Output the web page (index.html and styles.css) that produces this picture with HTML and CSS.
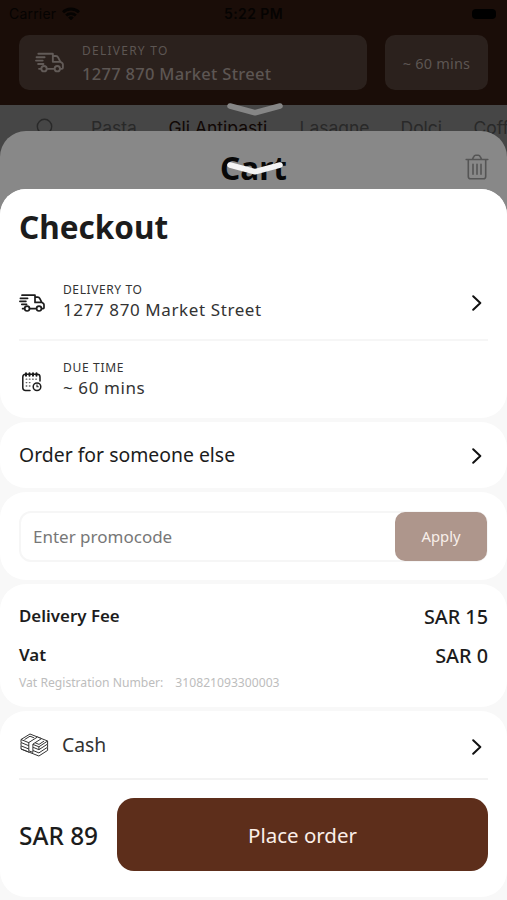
FILE: index.html
```html
<!DOCTYPE html>
<html lang="en">
<head>
<meta charset="utf-8">
<title>Checkout</title>
<link rel="stylesheet" href="styles.css">
</head>
<body>
<svg class="defs" width="0" height="0">
  <symbol id="truck" viewBox="0 0 26 18">
    <g fill="none" stroke="currentColor" stroke-width="1.7" stroke-linecap="round" stroke-linejoin="round">
      <path d="M3 1.200h13v7.200h6.800M16 3.200h2.800q1.300 0 1.900 1.200l2.100 4 1.300.8q.9.600.9 1.600v3q0 .9-.9.900h-1M17.200 14.700H11M5.400 14.700H3.600M1.400 4.300h7.200M.9 7.300h6M2.800 10.300h4.800"/>
      <circle cx="8.100" cy="14.600" r="2.400"/><circle cx="20" cy="14.600" r="2.400"/>
    </g>
  </symbol>
  <symbol id="chevron" viewBox="0 0 10 16">
    <path d="M1.200 1.200 8.300 8 1.200 14.800" fill="none" stroke="currentColor" stroke-width="2" stroke-linecap="round" stroke-linejoin="round"/>
  </symbol>
  <symbol id="grabber" viewBox="0 0 58 16">
    <path d="M4 4 29 10.800 54 4" fill="none" stroke="currentColor" stroke-width="5.600" stroke-linecap="round" stroke-linejoin="round"/>
  </symbol>
</svg>

<div class="home">
  <header class="top">
    <div class="status">
      <span class="carrier">Carrier
        <svg width="18" height="13" viewBox="0 0 18 13"><path d="M0 4.200a13 13 0 0 1 18 0l-2 2.100a10 10 0 0 0-14 0zM3.200 7.500a8.400 8.400 0 0 1 11.600 0l-1.900 2a5.700 5.700 0 0 0-7.800 0zM6.200 10.600a4 4 0 0 1 5.600 0L9 13.400z" fill="currentColor"/></svg>
      </span>
      <span class="clock">5:22 PM</span>
      <span class="battery"></span>
    </div>
    <div class="chips">
      <div class="chip address">
        <svg width="29" height="21"><use href="#truck"/></svg>
        <div>
          <div class="chip-label">DELIVERY TO</div>
          <div class="chip-value">1277 870 Market Street</div>
        </div>
      </div>
      <div class="chip eta">~ 60 mins</div>
    </div>
  </header>
  <nav class="tabs">
    <svg width="17" height="20" viewBox="0 0 17 20"><circle cx="8.500" cy="8.500" r="7.200" fill="none" stroke="currentColor" stroke-width="1.400"/></svg>
    <span class="pasta">Pasta</span><span class="active">Gli Antipasti</span><span class="lasagne">Lasagne</span><span class="dolci">Dolci</span><span>Coff</span>
  </nav>
</div>

<svg class="grab grab-cart"><use href="#grabber"/></svg>
<section class="cart">
  <h2>Cart</h2>
  <svg class="trash" width="24" height="26" viewBox="0 0 24 26" fill="none" stroke="currentColor" stroke-width="1.600" stroke-linecap="round" stroke-linejoin="round">
    <path d="M1.200 5.500h21.600M7.500 5.200l1.300-2.600q.6-1.300 1.900-1.300h2.600q1.300 0 1.900 1.300l1.300 2.600M3.300 6v16.500q0 2.300 2.300 2.300h12.800q2.300 0 2.300-2.300V6M8 10.300v10M12 10.300v10M16 10.300v10"/>
  </svg>
</section>
<svg class="grab grab-checkout"><use href="#grabber"/></svg>

<main class="checkout">
  <section class="card details">
    <h1>Checkout</h1>
    <div class="row">
      <svg class="icon" width="26" height="18"><use href="#truck"/></svg>
      <div class="info"><div class="label">DELIVERY TO</div><div class="value">1277 870 Market Street</div></div>
      <svg class="chev" width="10" height="16"><use href="#chevron"/></svg>
    </div>
    <div class="row due">
      <svg class="icon" width="26" height="20" viewBox="0 0 26 20" fill="none" stroke="currentColor" stroke-width="1.500" stroke-linecap="round">
        <path d="M11 18.400H6.500q-2.700 0-2.700-2.700V5q0-2.700 2.700-2.700h11.800Q21 2.300 21 5v4"/>
        <path d="M7 1.200v2.500M10.500 1.200v2.500M14 1.200v2.500M17.500 1.200v2.500" stroke-width="2"/>
        <path d="M7.200 7.200h11M7.200 10.600h6M7.200 14h4" stroke-width="1.300" stroke-dasharray=".6 2.600" opacity=".7"/>
        <circle cx="18" cy="14.700" r="3.800"/><path d="M18 12.800v2h1.300" stroke-width="1.100"/>
      </svg>
      <div class="info"><div class="label due-label">DUE TIME</div><div class="value">~ 60 mins</div></div>
    </div>
  </section>

  <section class="card other">
    <span>Order for someone else</span>
    <svg class="chev" width="10" height="16"><use href="#chevron"/></svg>
  </section>

  <section class="card promo">
    <div class="field"><span>Enter promocode</span><button class="apply">Apply</button></div>
  </section>

  <section class="card fees">
    <div class="fee"><span>Delivery Fee</span><b>SAR 15</b></div>
    <div class="fee"><span>Vat</span><b>SAR 0</b></div>
    <div class="vat"><span>Vat Registration Number:</span><span>310821093300003</span></div>
  </section>

  <section class="card pay">
    <div class="method">
      <svg class="cash" width="29" height="24" viewBox="0 0 29 24" fill="none" stroke="currentColor" stroke-width="1" stroke-linejoin="round">
        <path d="M1 6.500 10 1l17.600 7-8.700 5.800zM4.500 6.600 10 3.200l4.200 1.700M24 8.100l-5 3.300-4.300-1.800"/>
        <path d="M1 6.500v3l8 3.300M1 9.800v3l8 3.300M1 13v3l8 3.200M27.600 8v3l-8.700 5.700-5.800-2.400M27.600 11.200v3l-8.700 5.700-5.800-2.400M27.600 14.400v3L18.900 23 1 16M18.900 13.800v2.800"/>
        <path d="M8.800 9.500 17.500 4l4 1.600-8.600 5.500v8.300L8.800 17.800z" fill="#fff"/>
      </svg>
      <span>Cash</span>
      <svg class="chev pay-chev" width="10" height="16"><use href="#chevron"/></svg>
    </div>
    <div class="total"><strong>SAR 89</strong><button class="place">Place order</button></div>
  </section>
</main>
</body>
</html>
```

FILE: styles.css
```css
* { box-sizing: border-box; }
body { margin: 0; width: 507px; height: 900px; overflow: hidden; position: relative; background: #464646; font-family: "Noto Sans", sans-serif; color: #1c1c1c; }
h1, h2 { margin: 0; }
svg { flex: none; display: block; }
button { border: 0; font-family: inherit; padding: 0; }
.defs { position: absolute; }

.top { height: 105px; background: #1a0d08; }
.status { height: 35px; padding: 0 11px 8px 9px; display: grid; grid-template-columns: 1fr auto 1fr; align-items: center; color: #050302; font: 14px/27px Inter, sans-serif; }
.carrier { display: flex; align-items: center; gap: 6px; letter-spacing: .2px; }
.clock { font-weight: 600; letter-spacing: .4px; padding-left: 2px; }
.battery { justify-self: end; width: 24px; height: 10px; border-radius: 4px; background: #000; }
.chips { display: flex; gap: 18px; padding: 0 19px; }
.chip { height: 55px; border-radius: 10px; background: #2b211d; color: #5d5653; display: flex; align-items: center; }
.address { width: 348px; padding-left: 16px; gap: 18px; }
.address svg { color: #625b58; }
.chip-label { font-size: 12px; line-height: 18px; letter-spacing: 1.250px; margin-top: 4px; }
.chip-value { font-size: 16.500px; line-height: 28px; font-weight: 500; letter-spacing: .3px; }
.eta { flex: 1; justify-content: center; font-size: 14.500px; letter-spacing: .2px; }
.tabs { height: 60px; padding: 13px 0 0 36px; display: flex; white-space: nowrap; font: 17.500px/20px Inter, sans-serif; color: #292929; background: #464646; }
.tabs .pasta { margin-left: 38px; width: 77.500px; }
.tabs .active { color: #110805; width: 131px; }
.tabs .lasagne { width: 101px; }
.tabs .dolci { width: 73px; }
.tabs span { flex: none; }

.grab { position: absolute; left: 226px; width: 58px; height: 16px; z-index: 2; }
.grab-cart { top: 102px; color: #868686; }
.grab-checkout { top: 161px; color: #f4f4f4; }
.cart { position: absolute; inset: 131px 0 0; border-radius: 26px 26px 0 0; background: #888; padding-top: 15px; }
.cart h2 { text-align: center; font-size: 31.500px; line-height: 44px; color: #080808; }
.trash { position: absolute; right: 18px; top: 23px; color: #555; }

.checkout { position: absolute; inset: 189px 0 0; z-index: 3; border-radius: 26px 26px 0 0; background: #f8f8f8; display: flex; flex-direction: column; gap: 4px; }
.card { background: #fff; border-radius: 26px; padding: 0 19px; }
.details { height: 229px; }
h1 { font-size: 31.500px; line-height: 42px; padding: 17px 0 0; height: 76px; }
.row { display: flex; align-items: center; height: 76px; border-bottom: 2px solid #f6f6f6; }
.row .icon { position: relative; top: 1px; }
.due { border: 0; height: 78px; }
.due .icon { top: 2px; }
.info { flex: 1; padding: 0 0 2px 18px; }
.label { font-size: 12px; line-height: 18px; letter-spacing: .6px; color: #333; }
.due-label { letter-spacing: .7px; }
.value { font-size: 17px; line-height: 22px; letter-spacing: .6px; color: #333; }
.chev { margin: 2px 6px 0 0; color: #111; }
.other { height: 66px; display: flex; align-items: center; justify-content: space-between; font-size: 19.400px; }
.other span { padding-bottom: 2px; }
.promo { height: 88px; padding-top: 19px; }
.field { height: 51px; border: 2px solid #f6f6f6; border-radius: 12px; display: flex; align-items: center; justify-content: space-between; padding-left: 12px; font-size: 17px; color: #777; }
.apply { width: 92px; height: 49px; border-radius: 10px; background: #ae968c; color: #f8efea; font-size: 14.800px; margin-right: -1px; padding-bottom: 2px; flex: none; }
.fees { height: 123px; padding-top: 12px; }
.fee { height: 39px; display: flex; align-items: center; justify-content: space-between; font-size: 16.900px; font-weight: 600; }
.fee b { font-size: 19.800px; font-weight: 500; padding-top: 1px; }
.vat { display: flex; gap: 12px; font-size: 12.150px; line-height: 18px; color: #bdbdbd; }
.pay { height: 186px; }
.method { height: 69px; display: flex; align-items: center; border-bottom: 2px solid #f3f3f3; font-size: 19.300px; color: #333; }
.method span { flex: 1; padding-left: 14px; }
.cash { position: relative; left: 1px; }
.pay-chev { margin-top: 4px; }
.total { display: flex; justify-content: space-between; align-items: center; padding-top: 18px; }
.total strong { font-size: 24.400px; font-weight: 500; padding-top: 2px; }
.place { width: 371px; height: 73px; border-radius: 17px; background: #5d2e1b; color: #fbeee8; font-size: 20.500px; }
```
